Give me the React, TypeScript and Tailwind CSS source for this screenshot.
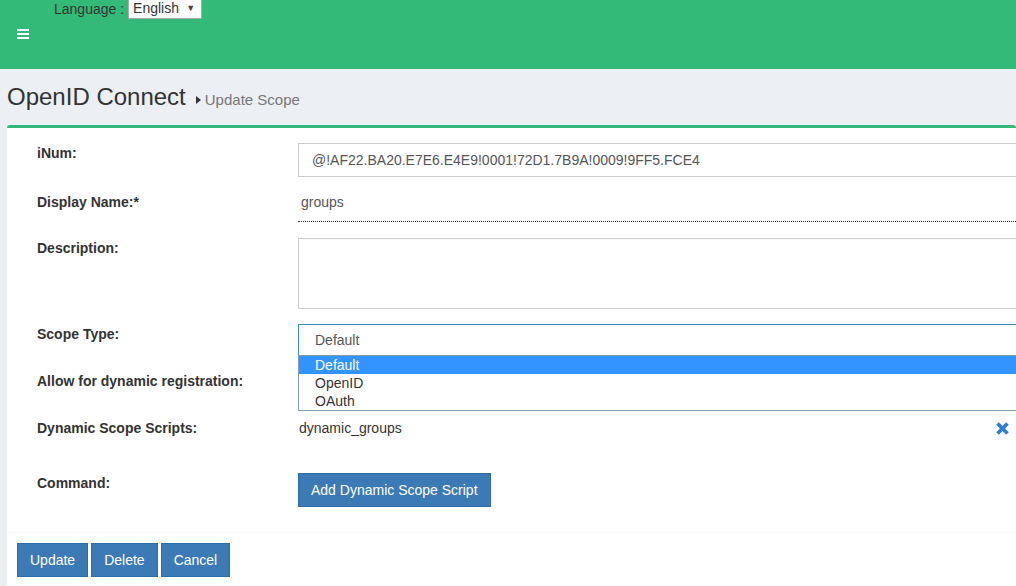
import React from "react";

// Row of the scope form: bold label on the left, field on the right.
const Row: React.FC<{ label: string; className?: string; children?: React.ReactNode }> = ({
  label,
  className = "",
  children,
}) => (
  <div className={`flex items-start ${className}`}>
    <label className="w-[261px] shrink-0 text-[14px] leading-[20px] font-bold text-[#333]">{label}</label>
    <div className="relative w-[740px] shrink-0">{children}</div>
  </div>
);

const BlueButton: React.FC<{ children: React.ReactNode; className?: string }> = ({ children, className = "" }) => (
  <button
    className={`h-[34px] bg-[#3c7ab6] border border-[#2e6da4] text-white text-[14px] leading-[20px] px-[12px] ${className}`}
  >
    {children}
  </button>
);

export default function App() {
  return (
    <div
      className="w-[1016px] h-[586px] overflow-hidden bg-[#ecf0f5] text-[#333]"
      style={{ fontFamily: '"Liberation Sans", Arial, sans-serif' }}
    >
      {/* Top bar */}
      <header className="h-[69px] bg-[#34ba78]">
        <div className="flex items-center pl-[54px] h-[18px]">
          <span className="text-[14px] text-[#333] leading-[18px]">Language :</span>
          <div className="ml-[4px] w-[74px] h-[19px] bg-white border border-[#aaa] border-t-0 flex items-center justify-between pl-[4px] pr-[6px] text-[14px] text-[#333]">
            <span>English</span>
            <span className="text-[9px] text-[#444]">▼</span>
          </div>
        </div>
        <div className="ml-[17px] mt-[11px] w-[12px] flex flex-col gap-[2px]">
          <span className="block h-[2px] bg-white" />
          <span className="block h-[2px] bg-white" />
          <span className="block h-[2px] bg-white" />
        </div>
      </header>

      {/* Page title */}
      <div className="flex items-end pl-[7px] pt-[14px] pb-[14px]">
        <h1 className="text-[24px] leading-[28px] text-[#333]">OpenID Connect</h1>
        <span className="ml-[10px] flex items-center text-[15px] text-[#777]">
          <svg width="5" height="8" viewBox="0 0 5 8" className="mr-[4px]">
            <path d="M0 0 L5 4 L0 8 Z" fill="#333" />
          </svg>
          Update Scope
        </span>
      </div>

      {/* Box */}
      <div className="ml-[7px] bg-white border-t-[3px] border-[#34ba78] rounded-t-[3px]">
        <div className="pl-[30px] pt-[15px] pb-[25px] border-b border-[#f4f4f4]">
          <Row label="iNum:">
            <div className="h-[34px] border border-[#ccc] flex items-center pl-[13px] text-[14px] text-[#555]">
              @!AF22.BA20.E7E6.E4E9!0001!72D1.7B9A!0009!9FF5.FCE4
            </div>
          </Row>

          <Row label="Display Name:*" className="mt-[15px]">
            <div className="h-[30px] border-b border-dotted border-[#333] pl-[3px] text-[14px] leading-[20px] text-[#555]">
              groups
            </div>
          </Row>

          <Row label="Description:" className="mt-[16px]">
            <div className="h-[71px] border border-[#ccc]" />
          </Row>

          <Row label="Scope Type:" className="mt-[15px]">
            <div className="h-[33px] border border-[#3c8dbc] flex items-center pl-[16px] text-[14px] text-[#555]">
              Default
            </div>
            {/* open option list */}
            <div className="absolute left-0 top-[31px] w-full z-10 bg-white border border-[#7f9db9] text-[14px] leading-[18px]">
              <div className="bg-[#3393ff] text-white pl-[16px]">Default</div>
              <div className="pl-[16px] text-[#333]">OpenID</div>
              <div className="pl-[16px] text-[#333]">OAuth</div>
            </div>
          </Row>

          <Row label="Allow for dynamic registration:" className="mt-[14px] h-[32px]">
            <div className="h-[20px]" />
          </Row>

          <Row label="Dynamic Scope Scripts:" className="mt-[15px] h-[40px]">
            <div className="flex items-center justify-between h-[20px] pl-[1px] pr-[29px] text-[14px] text-[#333]">
              <span>dynamic_groups</span>
              <svg width="13" height="13" viewBox="0 0 12 12">
                <path
                  d="M2.6 0.2 L6 3.6 L9.4 0.2 L11.8 2.6 L8.4 6 L11.8 9.4 L9.4 11.8 L6 8.4 L2.6 11.8 L0.2 9.4 L3.6 6 L0.2 2.6 Z"
                  fill="#2a7fd4"
                />
              </svg>
            </div>
          </Row>

          <Row label="Command:" className="mt-[15px]">
            <BlueButton>Add Dynamic Scope Script</BlueButton>
          </Row>
        </div>

        {/* Footer */}
        <div className="flex gap-[3px] pl-[10px] pt-[10px] pb-[10px]">
          <BlueButton>Update</BlueButton>
          <BlueButton>Delete</BlueButton>
          <BlueButton>Cancel</BlueButton>
        </div>
      </div>
    </div>
  );
}
